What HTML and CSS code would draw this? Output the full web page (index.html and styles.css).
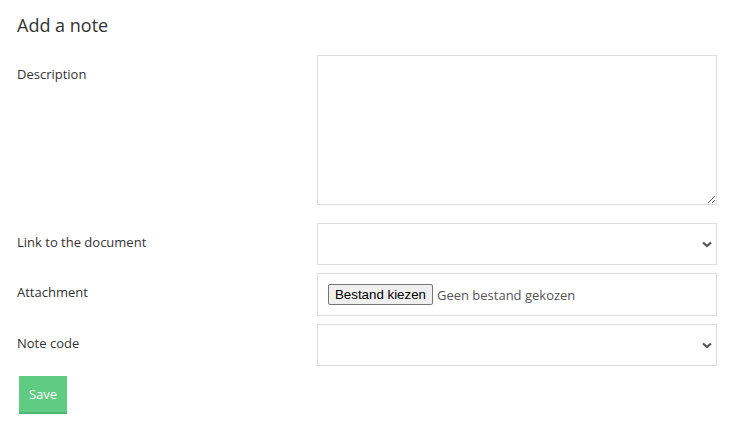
FILE: index.html
```html
<html>

<head>
  <title>Add a note</title>
  <link rel="stylesheet" href="styles.css">
</head>

<body>
  <div class="page">
    <h3>Add a note</h3>

    <form class="note-form">
      <div class="row row-tall">
        <label>Description</label>
        <textarea class="field"></textarea>
      </div>

      <div class="row">
        <label>Link to the document</label>
        <div class="select-wrap">
          <select class="field select"></select>
          <svg class="chevron" width="10" height="7" viewBox="0 0 10 7">
            <path d="M1 1.5 L5 5 L9 1.5" fill="none" stroke="#555" stroke-width="2.2" />
          </svg>
        </div>
      </div>

      <div class="row">
        <label>Attachment</label>
        <div class="field file">
          <button type="button" class="file-btn">Bestand kiezen</button>
          <span class="file-name">Geen bestand gekozen</span>
        </div>
      </div>

      <div class="row">
        <label>Note code</label>
        <div class="select-wrap">
          <select class="field select"></select>
          <svg class="chevron" width="10" height="7" viewBox="0 0 10 7">
            <path d="M1 1.5 L5 5 L9 1.5" fill="none" stroke="#555" stroke-width="2.2" />
          </svg>
        </div>
      </div>

      <button type="button" class="button">Save</button>
    </form>
  </div>
</body>

</html>
```

FILE: styles.css
```css
body {
  margin: 0;
  font-family: 'Open Sans', sans-serif;
  color: #333;
  background: #fff;
}

.page {
  padding: 13px 17px;
}

h3 {
  font-size: 18px;
  font-weight: normal;
  margin: 0 0 17px 0;
  line-height: 25px;
  color: #333;
}

.row {
  display: grid;
  grid-template-columns: 300px 400px;
  margin-bottom: 8px;
}

.row-tall {
  margin-bottom: 18px;
}

label {
  font-size: 13px;
  padding-top: 11px;
  line-height: 17px;
}

.field {
  box-sizing: border-box;
  width: 400px;
  border: 1px solid #dcdcdc;
  background: #fff;
  font-family: 'Open Sans', sans-serif;
  font-size: 13px;
  margin: 0;
}

textarea.field {
  height: 150px;
  display: block;
}

.select-wrap {
  position: relative;
}

.select {
  appearance: none;
  height: 42px;
  display: block;
  border-radius: 0;
}

.chevron {
  position: absolute;
  right: 5px;
  top: 18px;
}

.file {
  height: 43px;
  display: flex;
  align-items: center;
  padding-left: 10px;
}

.file-btn {
  font-family: 'Liberation Sans', Arial, sans-serif;
  font-size: 13.3px;
  color: #000;
  background: #efefef;
  border: 1px solid #767676;
  border-radius: 2px;
  padding: 1px 6px;
  height: 21px;
  margin: 0 4px 0 0;
}

.file-name {
  color: #555;
  font-size: 13px;
}

.button {
  margin: 2px 0 0 2px;
  width: 48px;
  height: 38px;
  background: #60cb83;
  border: none;
  border-bottom: 2px solid #4fb571;
  color: #fff;
  font-family: 'Open Sans', sans-serif;
  font-size: 13px;
  padding: 0;
  cursor: pointer;
}
```
